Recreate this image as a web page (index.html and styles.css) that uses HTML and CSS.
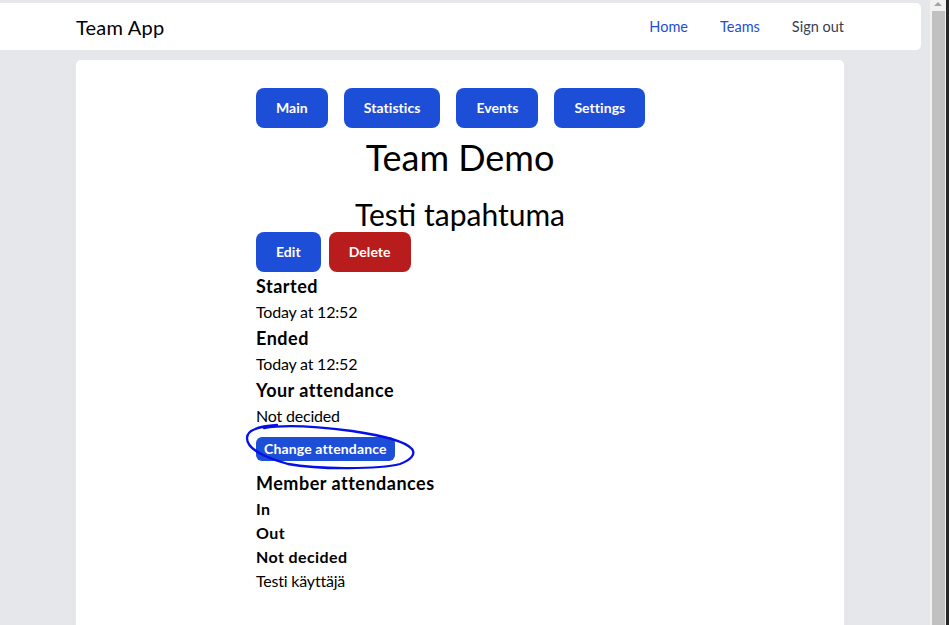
FILE: index.html
```html
<!DOCTYPE html>
<html lang="en">
<head>
<meta charset="utf-8">
<title>Team App</title>
<link rel="stylesheet" href="styles.css">
</head>
<body>
<div class="window">
  <div class="page">
    <header class="topbar">
      <div class="topbar-inner">
        <a class="brand" href="#">Team App</a>
        <nav class="nav">
          <a class="nav-link nav-link-active" href="#">Home</a>
          <a class="nav-link nav-link-active" href="#">Teams</a>
          <a class="nav-link nav-link-muted" href="#">Sign out</a>
        </nav>
      </div>
    </header>
    <main class="card">
      <div class="content">
        <div class="tabs">
          <button class="btn btn-blue">Main</button>
          <button class="btn btn-blue">Statistics</button>
          <button class="btn btn-blue">Events</button>
          <button class="btn btn-blue">Settings</button>
        </div>
        <h1 class="team-title">Team Demo</h1>
        <h2 class="event-title">Testi tapahtuma</h2>
        <div class="actions">
          <button class="btn btn-blue">Edit</button>
          <button class="btn btn-red">Delete</button>
        </div>
        <div class="details">
          <h3 class="label">Started</h3>
          <p class="value">Today at 12:52</p>
          <h3 class="label">Ended</h3>
          <p class="value">Today at 12:52</p>
          <h3 class="label">Your attendance</h3>
          <p class="value">Not decided</p>
          <div class="attend-wrap">
            <button class="btn-small">Change attendance</button>
            <svg class="scribble" width="180" height="52" viewBox="0 0 180 52" aria-hidden="true">
              <path d="M 37 5 C 22 6, 7 9, 7 18 C 7 28, 20 36, 48 44 C 80 50, 140 49, 160 44 C 171 40, 176 34, 172 29 C 166 22, 146 16, 112 11 C 82 7, 46 4, 24 8" fill="none" stroke="#0510e6" stroke-width="2.3" stroke-linecap="round" stroke-linejoin="round"/>
            </svg>
          </div>
          <h3 class="label label-section">Member attendances</h3>
          <h4 class="sublabel">In</h4>
          <h4 class="sublabel">Out</h4>
          <h4 class="sublabel">Not decided</h4>
          <p class="value">Testi käyttäjä</p>
        </div>
      </div>
    </main>
  </div>
  <div class="scrollbar">
    <span class="scroll-arrow"></span>
    <div class="scroll-thumb"></div>
  </div>
  <div class="window-edge"></div>
</div>
</body>
</html>
```
FILE: styles.css
```css
* { box-sizing: border-box; }

html, body {
  margin: 0;
  height: 625px;
  overflow: hidden;
}

body {
  font-family: Lato, "Noto Sans", sans-serif;
  color: #000;
  background: #e5e7eb;
}

.window {
  display: flex;
  height: 625px;
}

.page {
  flex: 1;
  min-width: 0;
  background: #e5e7eb;
  padding: 3px 9px 0 0;
  display: flex;
  flex-direction: column;
}

/* header */
.topbar {
  background: #fff;
  height: 47px;
  border-radius: 0 5px 5px 0;
  padding: 0 77px 0 76px;
  display: flex;
  align-items: center;
}

.topbar-inner {
  flex: 1;
  display: flex;
  align-items: center;
  justify-content: space-between;
}

.brand {
  font-size: 20px;
  line-height: 28px;
  color: #000;
  text-decoration: none;
  letter-spacing: 0.2px;
}

.nav {
  display: flex;
  gap: 32px;
}

.nav-link {
  font-size: 14.5px;
  line-height: 20px;
  text-decoration: none;
}

.nav-link-active { color: #1d4ed8; }
.nav-link-muted { color: #374151; }

/* card */
.card {
  margin: 10px 77px 0 76px;
  flex: 1;
  background: #fff;
  border-radius: 5px 5px 0 0;
}

.content {
  width: 408px;
  margin: 0 auto;
  padding-top: 28px;
}

.tabs {
  display: flex;
  gap: 16px;
}

.btn {
  height: 40px;
  padding: 0 20px;
  border: 0;
  border-radius: 8px;
  color: #fff;
  font-family: inherit;
  font-weight: 700;
  font-size: 14px;
  letter-spacing: 0.05px;
  line-height: 40px;
}

.btn-blue { background: #1d4ed8; }
.btn-red { background: #b91c1c; }

.team-title {
  margin: 9px 0 0;
  font-size: 36px;
  line-height: 40px;
  font-weight: 400;
  text-align: center;
}

.event-title {
  margin: 19px 0 0;
  font-size: 30px;
  line-height: 36px;
  font-weight: 400;
  text-align: center;
}

.actions {
  display: flex;
  gap: 8px;
}

.details {
  display: flex;
  flex-direction: column;
  align-items: flex-start;
}

.label {
  margin: 0;
  font-size: 18px;
  line-height: 28px;
  font-weight: 700;
  letter-spacing: 0.5px;
}

.sublabel {
  margin: 0;
  font-size: 16px;
  line-height: 24px;
  font-weight: 700;
  letter-spacing: 0.4px;
}

.value {
  margin: 0;
  font-size: 16px;
  line-height: 24px;
  letter-spacing: -0.2px;
}

.attend-wrap {
  position: relative;
  margin: 9px 0 8px;
}

.btn-small {
  display: block;
  height: 24px;
  padding: 0 8px;
  border: 0;
  border-radius: 6px;
  background: #1d4ed8;
  color: #fff;
  font-family: inherit;
  font-weight: 700;
  font-size: 14px;
  letter-spacing: 0.15px;
  line-height: 24px;
}

.scribble {
  position: absolute;
  left: -16px;
  top: -17px;
  pointer-events: none;
}

/* scrollbar */
.scrollbar {
  width: 16px;
  background: #f1f1f1;
  position: relative;
  padding: 11px 1px 0 2px;
}

.scroll-arrow {
  position: absolute;
  top: 2px;
  left: 4px;
  width: 0;
  height: 0;
  border-left: 4px solid transparent;
  border-right: 4px solid transparent;
  border-bottom: 4px solid #a3a3a3;
}

.scroll-thumb {
  height: 100%;
  background: #c1c1c1;
}

.window-edge {
  width: 3px;
  background: #262626;
}
```
